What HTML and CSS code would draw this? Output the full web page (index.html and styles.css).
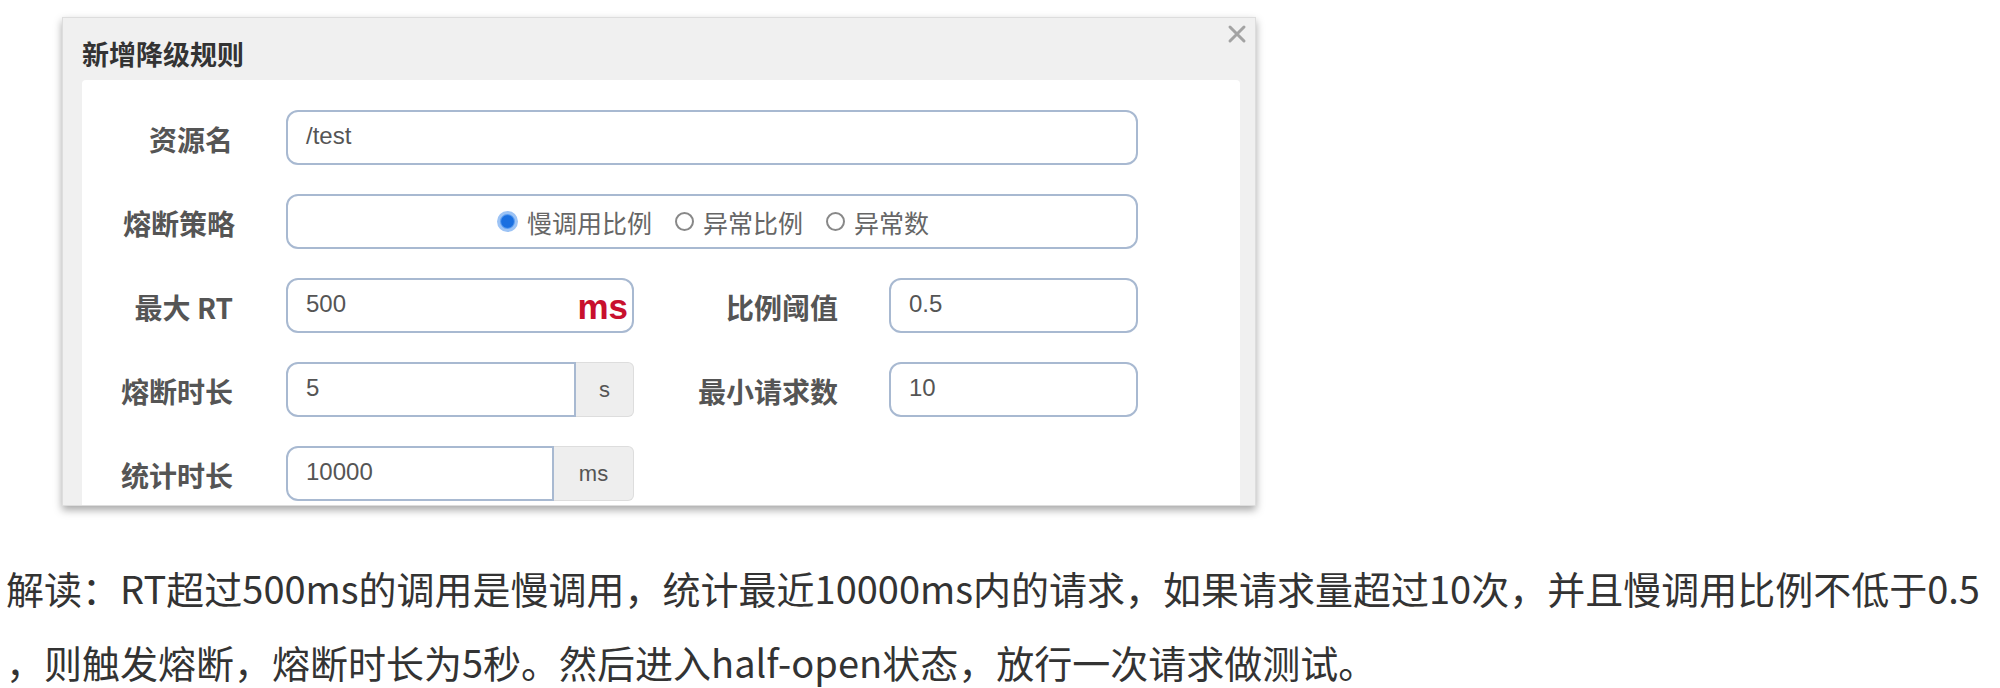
FILE: index.html
```html
<!DOCTYPE html>
<html>
<head>
  <title>新增降级规则</title>
  <link rel="stylesheet" href="styles.css">
</head>
<body>
  <div class="dialog">
    <div class="dialog-header">
      <h3>新增降级规则</h3>
      <svg class="close" width="20" height="20" viewBox="0 0 20 20">
        <path d="M3 3 L17 17 M17 3 L3 17" stroke="#a3a3a3" stroke-width="3" stroke-linecap="round" fill="none"/>
      </svg>
    </div>
    <div class="dialog-body">
      <form class="rule-form">
        <label>资源名</label>
        <div class="field wide"><span class="value">/test</span></div>

        <label>熔断策略</label>
        <div class="field wide radios">
          <span class="radio checked"></span><span class="radio-text">慢调用比例</span>
          <span class="radio"></span><span class="radio-text">异常比例</span>
          <span class="radio"></span><span class="radio-text">异常数</span>
        </div>

        <label>最大 RT</label>
        <div class="field"><span class="value">500</span><span class="unit-red">ms</span></div>
        <label>比例阈值</label>
        <div class="field"><span class="value">0.5</span></div>

        <label>熔断时长</label>
        <div class="group">
          <div class="field"><span class="value">5</span></div>
          <span class="addon addon-s">s</span>
        </div>
        <label>最小请求数</label>
        <div class="field"><span class="value">10</span></div>

        <label>统计时长</label>
        <div class="group">
          <div class="field"><span class="value">10000</span></div>
          <span class="addon addon-ms">ms</span>
        </div>
      </form>
    </div>
  </div>

  <p class="note">解读：RT超过500ms的调用是慢调用，统计最近10000ms内的请求，如果请求量超过10次，并且慢调用比例不低于0.5<br>，则触发熔断，熔断时长为5秒。然后进入half-open状态，放行一次请求做测试。</p>
</body>
</html>
```

FILE: styles.css
```css
body {
  margin: 0;
  background-color: #fff;
  font-family: "Liberation Sans", "Noto Sans CJK SC", sans-serif;
}

.dialog {
  margin: 17px 0 0 62px;
  width: 1194px;
  height: 489px;
  background-color: #f0f0f0;
  border: 1px solid #ddd;
  box-sizing: border-box;
  box-shadow: 0 4px 8px rgba(0, 0, 0, 0.35);
  overflow: hidden;
  display: flex;
  flex-direction: column;
}

.dialog-header {
  height: 62px;
  display: flex;
  align-items: center;
  justify-content: space-between;
  padding: 0 8px 0 19px;
  flex-shrink: 0;
}

.dialog-header h3 {
  margin: 8px 0 0 0;
  font-family: "Noto Sans CJK SC", sans-serif;
  font-size: 27px;
  font-weight: bold;
  color: #333;
}

.close {
  align-self: flex-start;
  margin-top: 6px;
}

.dialog-body {
  flex-grow: 1;
  margin: 0 15px 0 19px;
  background-color: #fff;
  border-radius: 4px 4px 0 0;
  padding-top: 30px;
}

.rule-form {
  display: grid;
  grid-template-columns: 204px 348px 255px 249px;
  grid-auto-rows: 55px;
  row-gap: 29px;
}

.rule-form label {
  font-family: "Noto Sans CJK SC", sans-serif;
  font-weight: bold;
  font-size: 28px;
  color: #555;
  padding-right: 53px;
  display: flex;
  align-items: center;
  justify-content: flex-end;
  margin-top: 3px;
}

.rule-form label:nth-child(4n+3) {
  padding-right: 51px;
}

.field {
  border: 2px solid #a8b9d1;
  border-radius: 12px;
  background-color: #fff;
  display: flex;
  align-items: center;
  padding: 0 4px 0 18px;
  box-sizing: border-box;
  color: #555;
  font-size: 24px;
}

.field.wide {
  grid-column: 2 / 5;
}

.value {
  flex-grow: 1;
  margin-top: -4px;
}

.unit-red {
  color: #c8102e;
  font-weight: bold;
  font-size: 35px;
  margin-top: 2px;
}

.radios {
  justify-content: center;
  padding-right: 16px;
  font-family: "Noto Sans CJK SC", sans-serif;
  font-size: 25px;
  color: #666;
}

.radio {
  width: 19px;
  height: 19px;
  border: 2px solid #888;
  border-radius: 50%;
  box-sizing: border-box;
  margin: 0 9px 0 23px;
}

.radio:first-child {
  margin-left: 0;
}

.radio.checked {
  border: 3px solid #9cc3f5;
  background: radial-gradient(circle, #1a6fe0 55%, #5a9cf0 65%);
  width: 21px;
  height: 21px;
}

.group {
  display: flex;
}

.group .field {
  flex-grow: 1;
  border-radius: 12px 0 0 12px;
}

.addon {
  background-color: #eee;
  border: 1px solid #ddd;
  border-left: none;
  border-radius: 0 6px 6px 0;
  color: #555;
  font-size: 22px;
  display: flex;
  align-items: center;
  justify-content: center;
}

.addon-s {
  width: 57px;
}

.addon-ms {
  width: 79px;
}

.note {
  margin: 45px 0 0 6px;
  font-family: "Noto Sans CJK SC", sans-serif;
  font-size: 38px;
  line-height: 74px;
  color: #333;
}
```
